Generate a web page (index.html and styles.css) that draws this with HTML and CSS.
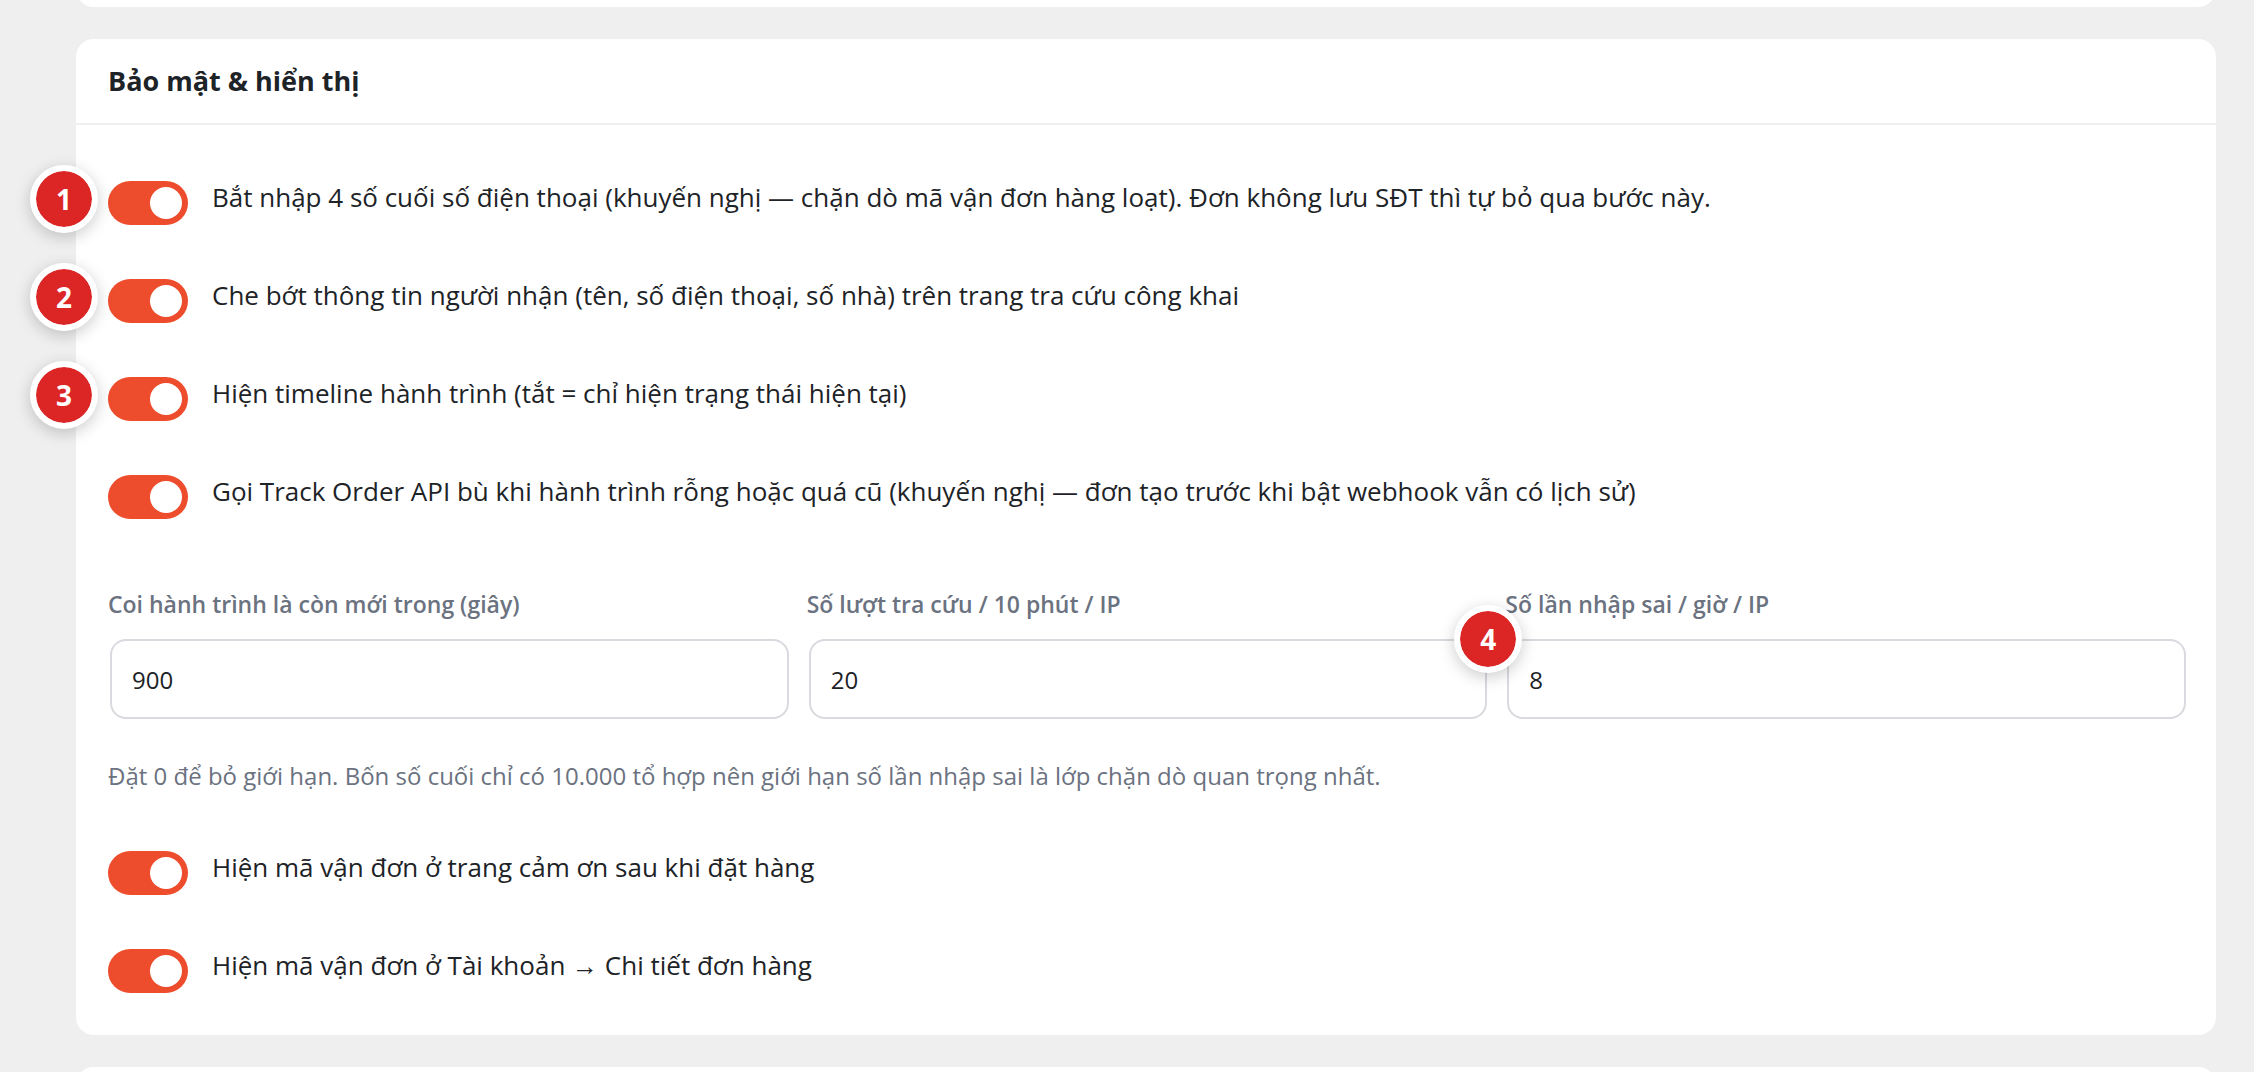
FILE: index.html
```html
<!DOCTYPE html>
<html lang="vi">
<head>
  <meta charset="utf-8">
  <meta name="viewport" content="width=device-width, initial-scale=1">
  <title>Bảo mật &amp; hiển thị</title>
  <link rel="stylesheet" href="styles.css">
</head>
<body>
  <main class="page">
    <div class="peek peek-top"><div class="card card-empty"></div></div>

    <section class="card">
      <header class="card-header"><h2 class="card-title">Bảo mật &amp; hiển thị</h2></header>
      <div class="card-body">
        <div class="toggles">
          <label class="toggle">
            <span class="badge">1</span>
            <input class="switch" type="checkbox" checked>
            <span class="toggle-text">Bắt nhập 4 số cuối số điện thoại (khuyến nghị — chặn dò mã vận đơn hàng loạt). Đơn không lưu SĐT thì tự bỏ qua bước này.</span>
          </label>
          <label class="toggle">
            <span class="badge">2</span>
            <input class="switch" type="checkbox" checked>
            <span class="toggle-text">Che bớt thông tin người nhận (tên, số điện thoại, số nhà) trên trang tra cứu công khai</span>
          </label>
          <label class="toggle">
            <span class="badge">3</span>
            <input class="switch" type="checkbox" checked>
            <span class="toggle-text">Hiện timeline hành trình (tắt = chỉ hiện trạng thái hiện tại)</span>
          </label>
          <label class="toggle">
            <input class="switch" type="checkbox" checked>
            <span class="toggle-text">Gọi Track Order API bù khi hành trình rỗng hoặc quá cũ (khuyến nghị — đơn tạo trước khi bật webhook vẫn có lịch sử)</span>
          </label>
        </div>

        <div class="fields">
          <div class="field">
            <label class="field-label" for="fresh">Coi hành trình là còn mới trong (giây)</label>
            <input class="field-input" id="fresh" type="text" inputmode="numeric" value="900">
          </div>
          <div class="field">
            <label class="field-label" for="lookups">Số lượt tra cứu / 10 phút / IP</label>
            <input class="field-input" id="lookups" type="text" inputmode="numeric" value="20">
          </div>
          <div class="field">
            <label class="field-label" for="fails">Số lần nhập sai / giờ / IP</label>
            <input class="field-input" id="fails" type="text" inputmode="numeric" value="8">
            <span class="badge badge-field">4</span>
          </div>
        </div>
        <p class="hint">Đặt 0 để bỏ giới hạn. Bốn số cuối chỉ có 10.000 tổ hợp nên giới hạn số lần nhập sai là lớp chặn dò quan trọng nhất.</p>

        <div class="toggles">
          <label class="toggle">
            <input class="switch" type="checkbox" checked>
            <span class="toggle-text">Hiện mã vận đơn ở trang cảm ơn sau khi đặt hàng</span>
          </label>
          <label class="toggle">
            <input class="switch" type="checkbox" checked>
            <span class="toggle-text">Hiện mã vận đơn ở Tài khoản → Chi tiết đơn hàng</span>
          </label>
        </div>
      </div>
    </section>

    <div class="peek peek-bottom"><div class="card card-empty"></div></div>
  </main>
</body>
</html>
```

FILE: styles.css
```css
* {
  box-sizing: border-box;
}

body {
  margin: 0;
  background: #efefef;
  color: #1d2327;
  font-family: "Segoe UI", "Open Sans", "Noto Sans", sans-serif;
  font-size: 26px;
}

.page {
  display: flex;
  flex-direction: column;
  gap: 32px;
  min-height: 100vh;
  padding: 0 38px 0 76px;
}

.card {
  background: #fff;
  border-radius: 18px;
}

/* Edges of the neighbouring cards */
.peek {
  display: flex;
  flex-direction: column;
  overflow: hidden;
}

.peek-top {
  justify-content: flex-end;
  height: 7px;
}

.peek-bottom {
  flex: 1 1 0;
  min-height: 0;
}

.card-empty {
  flex: none;
  height: 48px;
}

.card-header {
  padding: 24px 32px;
  border-bottom: 2px solid #efefef;
}

.card-title {
  margin: 0;
  font-size: 27px;
  line-height: 36px;
  font-weight: 700;
}

.card-body {
  padding: 56px 32px 42px;
}

.toggles {
  display: flex;
  flex-direction: column;
  gap: 54px;
}

.toggle {
  position: relative;
  display: flex;
  align-items: flex-start;
  gap: 24px;
}

.toggle-text {
  line-height: 32px;
}

.switch {
  appearance: none;
  flex: none;
  display: flex;
  justify-content: flex-start;
  width: 80px;
  height: 44px;
  margin: 0;
  padding: 6px;
  border-radius: 22px;
  background: #c9ccd1;
  cursor: pointer;
}

.switch:checked {
  justify-content: flex-end;
  background: #ee4d2d;
}

.switch::before {
  content: "";
  width: 32px;
  height: 32px;
  border-radius: 50%;
  background: #fff;
}

.badge {
  position: absolute;
  top: -16px;
  left: -78px;
  display: flex;
  align-items: center;
  justify-content: center;
  width: 68px;
  height: 68px;
  border: 6px solid #fff;
  border-radius: 50%;
  background: #dc2626;
  background-clip: padding-box;
  box-shadow: 0 4px 16px rgba(0, 0, 0, 0.2);
  color: #fff;
  font-size: 28px;
  line-height: 36px;
  font-weight: 700;
}

.badge-field {
  top: 17px;
  left: -51px;
}

.fields {
  display: grid;
  grid-template-columns: repeat(3, minmax(0, 1fr));
  gap: 20px;
  margin-top: 69px;
}

.field {
  position: relative;
}

.field-label {
  display: block;
  margin-bottom: 19px;
  color: #6b7280;
  font-size: 23px;
  line-height: 32px;
  font-weight: 600;
}

.field-input {
  display: block;
  width: 100%;
  height: 80px;
  margin: 0 2px;
  padding: 0 20px;
  border: 2px solid #d9d9df;
  border-radius: 16px;
  background: #fff;
  color: #1d2327;
  font: inherit;
  font-size: 24px;
}

.hint {
  margin: 41px 0 59px;
  color: #6b7280;
  font-size: 24px;
  line-height: 32px;
}
```
